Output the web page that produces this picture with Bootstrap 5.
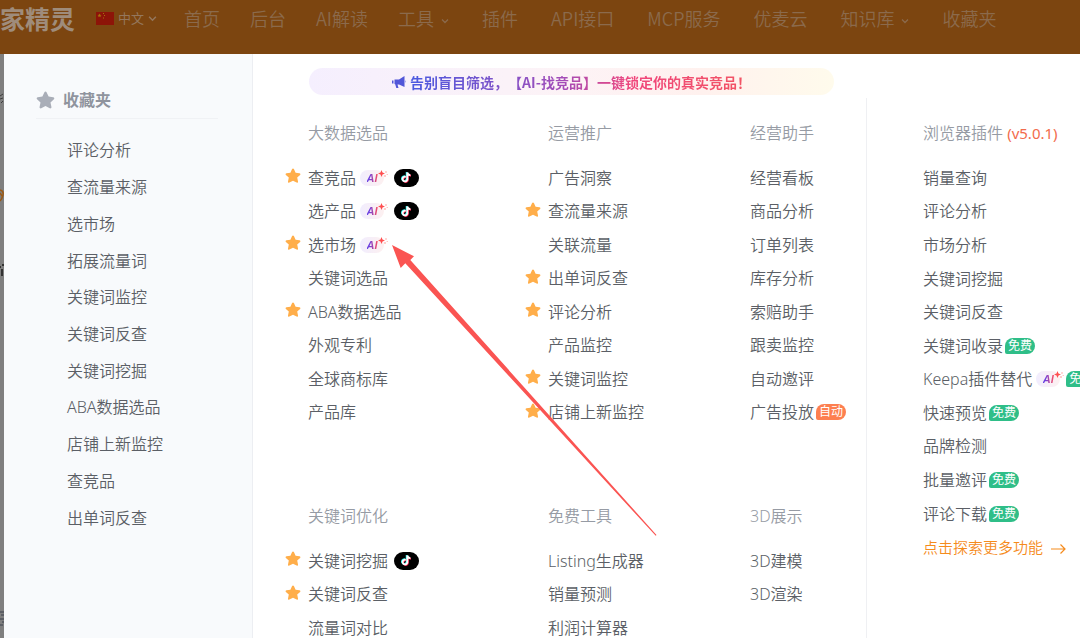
<!DOCTYPE html>
<html lang="zh-CN">
<head>
<meta charset="utf-8">
<meta name="viewport" content="width=device-width, initial-scale=1">
<title>卖家精灵</title>
<link rel="stylesheet" href="https://cdn.jsdelivr.net/npm/bootstrap@5.3.0/dist/css/bootstrap.min.css">
<style>
  body { font-family: "Noto Sans", "Noto Sans CJK SC", sans-serif; font-size: 16px; font-weight: 350; line-height: 24px; color: #5b5f66; background: #7f7f7f; height: 100vh; overflow: hidden; }
  a { color: inherit; text-decoration: none; white-space: nowrap; }
  .topbar { height: 54px; padding-bottom: 18px; background: #7c4510; color: #8b6a4c; font-family: "Noto Sans CJK SC", sans-serif; font-size: 18px; flex: none; }
  .topbar .brand { font-size: 25px; font-weight: 700; line-height: 36px; color: #9f8c7b; width: 75px; direction: rtl; }
  .topbar .lang { font-size: 13px; color: #94775d; margin-left: 21px; }
  .topbar .menu { margin-left: 27px; gap: 30px; }
  .topbar .links { margin-left: 33px; gap: 33px; }
  .topbar nav a { line-height: 24px; }
  .topbar nav svg { margin-left: 7px; }
  .mega { flex: 1 1 0; min-height: 0; }
  .edge { flex: 0 0 4px; background: #7f7f7f; }
  .favs { flex: 0 0 249px; background: #f8fafc; border-right: 1px solid #eceef2; padding: 34px 34px 0 32px; }
  .favs h2 { font-size: 16px; line-height: 24px; font-weight: 700; color: #8f949e; border-bottom: 1px solid #f0f2f5; padding-bottom: 6px; }
  .favs ul { height: 404px; margin-top: 13px; padding-left: 31px; }
  .even { display: grid; grid-auto-rows: 1fr; align-items: center; list-style: none; padding: 0; margin: 0; }
  .even li { display: flex; align-items: center; min-height: 0; }
  .panel { display: grid; grid-template-columns: 613fr 214fr; background: #fff; min-width: 0; overflow: hidden; }
  .promo { margin: 14px 32px 26px 56px; height: 27px; border-radius: 14px; background: linear-gradient(90deg, #f5effe, #fdf3f6 50%, #fff1ee 75%, #fffbec); font-size: 14px; font-weight: 700; }
  .promo span { font-family: "Noto Sans CJK SC", sans-serif; font-kerning: none; text-spacing-trim: space-all; background: linear-gradient(90deg, #4a5ae0, #a44db8 45%, #f0467c 65%, #f25563); -webkit-background-clip: text; background-clip: text; color: transparent; white-space: nowrap; }
  .groups { display: grid; grid-template-columns: 240fr 202fr 138fr; padding-left: 33px; row-gap: 75px; }
  .groups h3, .tools h3 { font-size: 16px; line-height: 24px; font-weight: 350; color: #969ba4; margin: 0 0 16px; white-space: nowrap; }
  .groups section { padding-left: 22px; min-width: 0; }
  .rows8 { height: 268px; }
  .rows3 { height: 101px; }
  .rows12 { height: 403px; }
  .star { position: absolute; width: 16px; height: 16px; margin-left: -23px; margin-top: -3px; fill: #ffae4a; }
  .tools { margin-top: 44px; padding: 23px 0 0 56px; border-left: 1px solid #eff0f3; min-width: 0; }
  .tools small { font-size: 15px; color: #f26b4c; font-weight: 400; }
  .ai { position: relative; flex: none; width: 24px; height: 16px; margin: 0 4px; border-radius: 8px; background: linear-gradient(90deg, #f1edfe, #fdf0f0); font: italic 700 11px/17px "Liberation Sans", sans-serif; text-align: center; }
  .ai b { background: linear-gradient(90deg, #6a3fe0 20%, #ff4d5e); -webkit-background-clip: text; background-clip: text; color: transparent; }
  .ai svg { position: absolute; top: 0; left: 18px; }
  .tik { flex: none; width: 25px; height: 18px; border-radius: 9px; background: #000; margin-left: 6px; display: flex; align-items: center; justify-content: center; }
  .tag { flex: none; width: 30px; height: 16px; margin-left: 2px; border-radius: 8px 8px 8px 2px; background: #2fbe88; color: #fff; font-size: 12px; line-height: 16px; text-align: center; font-weight: 400; }
  .tag-auto { background: #fd7f50; }
  .more { color: #f58b1c; font-size: 15px; }
  .arrow { position: absolute; left: 392px; top: 191px; pointer-events: none; }
</style>
</head>
<body class="d-flex flex-column">
<svg width="0" height="0" class="position-absolute" aria-hidden="true">
  <symbol id="star" viewBox="0 0 16 16"><path d="M7.1 1.1c.4-.8 1.4-.8 1.8 0l1.7 3.6 3.9.5c.9.1 1.2 1.1.6 1.7l-2.9 2.7.8 3.9c.2.9-.7 1.5-1.4 1.1L8 12.700l-3.600 1.900c-.7.4-1.600-.2-1.400-1.100l.8-3.900L.9 6.900c-.6-.6-.3-1.600.6-1.700l3.900-.5z"/></symbol>
  <symbol id="chev" viewBox="0 0 8 8"><path d="M1 2.500l3 3 3-3" fill="none" stroke="currentColor" stroke-width="1.300"/></symbol>
  <symbol id="spark" viewBox="0 0 10 9"><path d="M3.500 0l1 2.500 2.500 1-2.500 1-1 2.500-1-2.500L0 3.500l2.500-1z" fill="#ff4f50"/><circle cx="8" cy="2" r=".8" fill="#ffa3a0"/><circle cx="7" cy="6" r=".8" fill="#ff8d8a"/><circle cx="9.200" cy="4.500" r=".6" fill="#ffa3a0"/></symbol>
  <symbol id="note" viewBox="0 0 12 14"><g fill="none" stroke-width="2"><path d="M5.100 6.200A2.600 2.600 0 1 0 6.900 9V1.500c.2 1.700 1.400 2.900 3.300 3" stroke="#25f4ee" transform="translate(-.7 -.5)"/><path d="M5.100 6.200A2.600 2.600 0 1 0 6.900 9V1.500c.2 1.700 1.400 2.900 3.300 3" stroke="#fe2c55" transform="translate(.7 .6)"/><path d="M5.100 6.200A2.600 2.600 0 1 0 6.900 9V1.500c.2 1.700 1.400 2.900 3.300 3" stroke="#fff"/></g></symbol>
</svg>

<header class="topbar d-flex align-items-center text-nowrap overflow-hidden">
  <a class="brand" href="#">家精灵</a>
  <button type="button" class="lang btn p-0 border-0 d-flex align-items-center">
    <svg width="18" height="13" viewBox="0 0 18 13" class="me-1"><path fill="#8d1408" d="M0 0h18v13H0z"/><path fill="#a5750c" d="M3.500 1.500l.6 1.300 1.400.1-1.100.9.400 1.400-1.300-.8-1.200.8.300-1.400-1.100-.9 1.400-.1zM7 1h1v1H7zM8 3h1v1H8zM7 5.500h1v1H7z"/></svg>
    中文<svg width="9" height="9" class="ms-1"><use href="#chev"/></svg>
  </button>
  <nav class="d-flex align-items-center">
    <div class="menu d-flex">
      <a href="#">首页</a><a href="#">后台</a><a href="#">AI解读</a>
      <a href="#">工具<svg width="8" height="8"><use href="#chev"/></svg></a>
    </div>
    <div class="links d-flex">
      <a href="#">插件</a><a href="#">API接口</a><a href="#">MCP服务</a><a href="#">优麦云</a>
      <a href="#">知识库<svg width="8" height="8"><use href="#chev"/></svg></a>
      <a href="#">收藏夹</a>
    </div>
  </nav>
</header>

<div class="mega d-flex position-relative">
  <div class="edge"><svg width="4" height="584" fill="none"><path d="M0 42l3-2M0 45l3-1M1 49l2-2" stroke="#3c3c3c"/><path d="M0 136q4 1 3 5t-3 6M0 139l2 3" stroke="#9b5a16" stroke-width="1.500"/><path d="M2 215v7M0 213h1M2 211h2" stroke="#333" stroke-width="2"/><path d="M0 558h4M1 561h3M0 565h4M2 568h2M0 571h3" stroke="#3b414c"/></svg></div>

  <aside class="favs">
    <h2 class="d-flex align-items-center m-0"><svg width="19" height="19" class="me-2" fill="#a9aeb8"><use href="#star"/></svg>收藏夹</h2>
    <ul class="even">
      <li><a href="#">评论分析</a></li><li><a href="#">查流量来源</a></li><li><a href="#">选市场</a></li>
      <li><a href="#">拓展流量词</a></li><li><a href="#">关键词监控</a></li><li><a href="#">关键词反查</a></li>
      <li><a href="#">关键词挖掘</a></li><li><a href="#">ABA数据选品</a></li><li><a href="#">店铺上新监控</a></li>
      <li><a href="#">查竞品</a></li><li><a href="#">出单词反查</a></li>
    </ul>
  </aside>

  <main class="panel flex-fill">
    <div>
      <a href="#" class="promo d-flex align-items-center justify-content-center">
        <svg width="14" height="14" viewBox="0 0 14 14" class="me-1" fill="#5156d8"><path d="M12.500 1v11L7 9.500H5.500l1 3.500H4.300L3.200 9.300 2.500 9V4.500H7zM0 5.500h1.500v3H0zM13 5q1 1.500 0 3z"/></svg><span>告别盲目筛选，【AI-找竞品】一键锁定你的真实竞品！</span>
      </a>
      <div class="groups">
        <section>
          <h3>大数据选品</h3>
          <ul class="even rows8">
            <li><svg class="star"><use href="#star"/></svg><a href="#">查竞品</a><span class="ai"><b>AI</b><svg width="10" height="9"><use href="#spark"/></svg></span><span class="tik"><svg width="11" height="13"><use href="#note"/></svg></span></li>
            <li><a href="#">选产品</a><span class="ai"><b>AI</b><svg width="10" height="9"><use href="#spark"/></svg></span><span class="tik"><svg width="11" height="13"><use href="#note"/></svg></span></li>
            <li><svg class="star"><use href="#star"/></svg><a href="#">选市场</a><span class="ai"><b>AI</b><svg width="10" height="9"><use href="#spark"/></svg></span></li>
            <li><a href="#">关键词选品</a></li>
            <li><svg class="star"><use href="#star"/></svg><a href="#">ABA数据选品</a></li>
            <li><a href="#">外观专利</a></li>
            <li><a href="#">全球商标库</a></li>
            <li><a href="#">产品库</a></li>
          </ul>
        </section>
        <section>
          <h3>运营推广</h3>
          <ul class="even rows8">
            <li><a href="#">广告洞察</a></li>
            <li><svg class="star"><use href="#star"/></svg><a href="#">查流量来源</a></li>
            <li><a href="#">关联流量</a></li>
            <li><svg class="star"><use href="#star"/></svg><a href="#">出单词反查</a></li>
            <li><svg class="star"><use href="#star"/></svg><a href="#">评论分析</a></li>
            <li><a href="#">产品监控</a></li>
            <li><svg class="star"><use href="#star"/></svg><a href="#">关键词监控</a></li>
            <li><svg class="star"><use href="#star"/></svg><a href="#">店铺上新监控</a></li>
          </ul>
        </section>
        <section>
          <h3>经营助手</h3>
          <ul class="even rows8">
            <li><a href="#">经营看板</a></li><li><a href="#">商品分析</a></li><li><a href="#">订单列表</a></li>
            <li><a href="#">库存分析</a></li><li><a href="#">索赔助手</a></li><li><a href="#">跟卖监控</a></li>
            <li><a href="#">自动邀评</a></li><li><a href="#">广告投放</a><span class="tag tag-auto">自动</span></li>
          </ul>
        </section>
        <section>
          <h3>关键词优化</h3>
          <ul class="even rows3">
            <li><svg class="star"><use href="#star"/></svg><a href="#">关键词挖掘</a><span class="tik"><svg width="11" height="13"><use href="#note"/></svg></span></li>
            <li><svg class="star"><use href="#star"/></svg><a href="#">关键词反查</a></li>
            <li><a href="#">流量词对比</a></li>
          </ul>
        </section>
        <section>
          <h3>免费工具</h3>
          <ul class="even rows3">
            <li><a href="#">Listing生成器</a></li><li><a href="#">销量预测</a></li><li><a href="#">利润计算器</a></li>
          </ul>
        </section>
        <section>
          <h3>3D展示</h3>
          <ul class="even rows3">
            <li><a href="#">3D建模</a></li><li><a href="#">3D渲染</a></li><li></li>
          </ul>
        </section>
      </div>
    </div>

    <section class="tools">
      <h3>浏览器插件 <small>(v5.0.1)</small></h3>
      <ul class="even rows12">
        <li><a href="#">销量查询</a></li>
        <li><a href="#">评论分析</a></li>
        <li><a href="#">市场分析</a></li>
        <li><a href="#">关键词挖掘</a></li>
        <li><a href="#">关键词反查</a></li>
        <li><a href="#">关键词收录</a><span class="tag">免费</span></li>
        <li><a href="#">Keepa插件替代</a><span class="ai"><b>AI</b><svg width="10" height="9"><use href="#spark"/></svg></span><span class="tag">免费</span></li>
        <li><a href="#">快速预览</a><span class="tag">免费</span></li>
        <li><a href="#">品牌检测</a></li>
        <li><a href="#">批量邀评</a><span class="tag">免费</span></li>
        <li><a href="#">评论下载</a><span class="tag">免费</span></li>
        <li><a href="#" class="more">点击探索更多功能 <svg width="15" height="12" viewBox="0 0 15 12" class="ms-1" fill="none" stroke="currentColor" stroke-width="1.200"><path d="M0 6h14M9.500 1.500L14 6l-4.500 4.500"/></svg></a></li>
      </ul>
    </section>
  </main>

  <svg class="arrow" width="265" height="291" fill="#fa5452"><path d="M0 0l22 11.300-3.700 3.700L264.500 290l-.8 .8L13.300 18.300 8.700 23z"/></svg>
</div>
<script src="https://cdn.jsdelivr.net/npm/bootstrap@5.3.0/dist/js/bootstrap.bundle.min.js"></script>
</body>
</html>
